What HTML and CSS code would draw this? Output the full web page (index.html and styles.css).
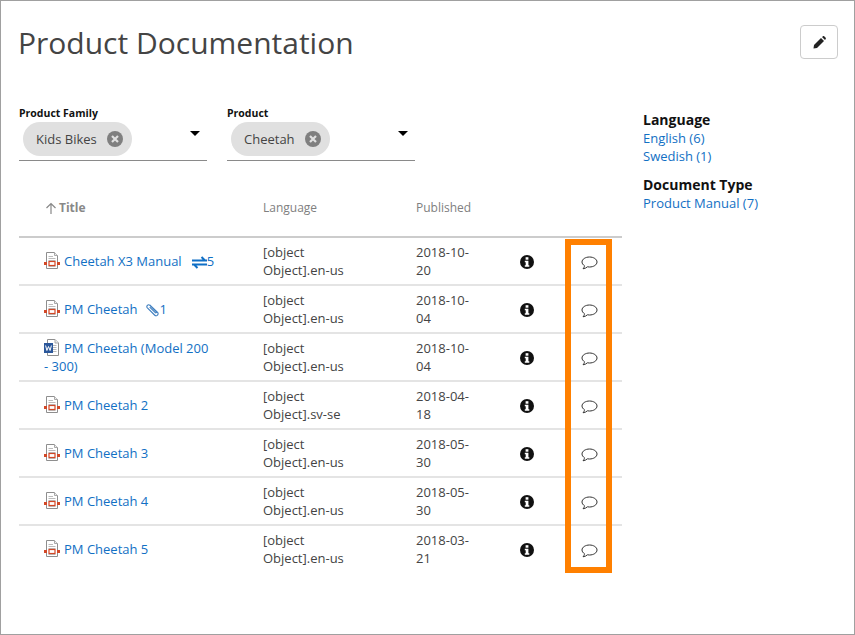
FILE: index.html
```html
<!DOCTYPE html>
<html lang="en">
<head>
<meta charset="utf-8">
<title>Product Documentation</title>
<link rel="stylesheet" href="styles.css">
</head>
<body>
<svg class="defs" width="0" height="0" aria-hidden="true">
  <defs>
    <symbol id="pdf" viewBox="0 0 16 17">
      <path d="M2.5.5H10.5L13.5 3.5V16.5H2.5Z" fill="#fff" stroke="#8e8e8e"/>
      <path d="M10.5.5V3.5H13.5" fill="#eee" stroke="#a8a8a8"/>
      <path d="M4.5 4.5H9M4.5 6.5H11.5M4.5 8.5H11.5M4.5 14.5H11.5" stroke="#bbb"/>
      <rect x="5" y="9.5" width="6" height="4" fill="#fff" stroke="#d24726" stroke-width="1.2"/>
      <rect x="0" y="10" width="3" height="3" fill="#d24726"/>
      <rect x="13" y="10" width="3" height="3" fill="#d24726"/>
    </symbol>
    <symbol id="word" viewBox="0 0 16 17">
      <path d="M3.5.5H11L14.5 4V16.5H3.5Z" fill="#fff" stroke="#8e8e8e"/>
      <path d="M11 .5V4H14.5" fill="#eee" stroke="#a8a8a8"/>
      <path d="M9 6.5H12.5M9 8.5H12.5M9 10.5H12.5M9 12.5H12.5" stroke="#bbb"/>
      <rect x="0" y="4" width="9" height="10" fill="#2b579a"/>
      <path d="M1.6 6.5L2.9 11.5L4.5 7.5L6.1 11.5L7.4 6.5" fill="none" stroke="#fff" stroke-width="1"/>
    </symbol>
    <symbol id="info" viewBox="0 0 14 14">
      <circle cx="7" cy="7" r="7" fill="#111"/>
      <rect x="5.6" y="2.2" width="2.8" height="2.5" fill="#fff"/>
      <path d="M4.8 5.7H8.4V10.2H9.3V11.8H4.8V10.2H5.7V7.3H4.8Z" fill="#fff"/>
    </symbol>
    <symbol id="bubble" viewBox="0 0 17 14">
      <path d="M8.5 1C4.4 1 1 3.2 1 6C1 7.5 2 8.8 3.5 9.7C3.4 10.7 3 11.8 2 12.8C3.9 12.6 5.4 11.8 6.4 10.8C7.1 10.9 7.8 11 8.5 11C12.6 11 16 8.8 16 6C16 3.2 12.6 1 8.5 1Z" fill="#fff" stroke="#333" stroke-width="1"/>
    </symbol>
  </defs>
</svg>
<div class="window">
  <main class="main">
    <h1 class="title">Product Documentation</h1>
    <div class="filters">
      <div class="filter">
        <label class="filter-label">Product Family</label>
        <div class="select">
          <span class="chip">Kids Bikes
            <svg class="chip-x" viewBox="0 0 16 16"><circle cx="8" cy="8" r="8" fill="#7f7f7f"/><path d="M5 5L11 11M11 5L5 11" stroke="#e0e0e0" stroke-width="2.2"/></svg>
          </span>
          <span class="caret"></span>
        </div>
      </div>
      <div class="filter">
        <label class="filter-label">Product</label>
        <div class="select">
          <span class="chip">Cheetah
            <svg class="chip-x" viewBox="0 0 16 16"><circle cx="8" cy="8" r="8" fill="#7f7f7f"/><path d="M5 5L11 11M11 5L5 11" stroke="#e0e0e0" stroke-width="2.2"/></svg>
          </span>
          <span class="caret"></span>
        </div>
      </div>
    </div>
    <div class="table-wrap">
      <table class="docs">
        <colgroup>
          <col class="c-title"><col class="c-lang"><col class="c-pub"><col class="c-info"><col class="c-comment">
        </colgroup>
        <thead>
          <tr>
            <th class="th-title"><svg class="sort" viewBox="0 0 12 12"><path d="M6 12V1.5M1.5 6L6 1.5L10.5 6" fill="none" stroke="#888" stroke-width="1.2"/></svg>Title</th>
            <th>Language</th>
            <th>Published</th>
            <th></th>
            <th></th>
          </tr>
        </thead>
        <tbody>
          <tr>
            <td class="td-title"><svg class="file"><use href="#pdf"/></svg><a href="#">Cheetah X3 Manual</a><svg class="tag-icon swap" viewBox="0 0 15 13"><path d="M0 4.5H12.5M9.5 1L13 4.5H15M15 8.5H2.5M5.5 12L2 8.5H0" fill="none" stroke="#0f6fc6" stroke-width="2"/></svg><a href="#">5</a></td>
            <td>[object Object].en-us</td><td>2018-10-20</td>
            <td class="td-icon"><svg class="info"><use href="#info"/></svg></td>
            <td class="td-icon"><svg class="bubble"><use href="#bubble"/></svg></td>
          </tr>
          <tr>
            <td class="td-title"><svg class="file"><use href="#pdf"/></svg><a href="#">PM Cheetah</a><svg class="tag-icon clip" viewBox="0 0 14 14"><path d="M4 1.5L12.5 9.5C13.6 10.8 12.8 12.2 12 12.8C11 13.5 10 13.2 9.2 12.4L1.5 4.8C.6 3.8 .8 2.8 1.5 2C2.3 1.2 3.3 1.1 4.2 2L11 8.8C11.6 9.5 10.8 10.4 10 9.8L4 3.8" fill="none" stroke="#3f7fc0" stroke-width="1.2"/></svg><a href="#">1</a></td>
            <td>[object Object].en-us</td><td>2018-10-04</td>
            <td class="td-icon"><svg class="info"><use href="#info"/></svg></td>
            <td class="td-icon"><svg class="bubble"><use href="#bubble"/></svg></td>
          </tr>
          <tr>
            <td class="td-title"><svg class="file"><use href="#word"/></svg><a href="#">PM Cheetah (Model 200 - 300)</a></td>
            <td>[object Object].en-us</td><td>2018-10-04</td>
            <td class="td-icon"><svg class="info"><use href="#info"/></svg></td>
            <td class="td-icon"><svg class="bubble"><use href="#bubble"/></svg></td>
          </tr>
          <tr>
            <td class="td-title"><svg class="file"><use href="#pdf"/></svg><a href="#">PM Cheetah 2</a></td>
            <td>[object Object].sv-se</td><td>2018-04-18</td>
            <td class="td-icon"><svg class="info"><use href="#info"/></svg></td>
            <td class="td-icon"><svg class="bubble"><use href="#bubble"/></svg></td>
          </tr>
          <tr>
            <td class="td-title"><svg class="file"><use href="#pdf"/></svg><a href="#">PM Cheetah 3</a></td>
            <td>[object Object].en-us</td><td>2018-05-30</td>
            <td class="td-icon"><svg class="info"><use href="#info"/></svg></td>
            <td class="td-icon"><svg class="bubble"><use href="#bubble"/></svg></td>
          </tr>
          <tr>
            <td class="td-title"><svg class="file"><use href="#pdf"/></svg><a href="#">PM Cheetah 4</a></td>
            <td>[object Object].en-us</td><td>2018-05-30</td>
            <td class="td-icon"><svg class="info"><use href="#info"/></svg></td>
            <td class="td-icon"><svg class="bubble"><use href="#bubble"/></svg></td>
          </tr>
          <tr>
            <td class="td-title"><svg class="file"><use href="#pdf"/></svg><a href="#">PM Cheetah 5</a></td>
            <td>[object Object].en-us</td><td>2018-03-21</td>
            <td class="td-icon"><svg class="info"><use href="#info"/></svg></td>
            <td class="td-icon"><svg class="bubble"><use href="#bubble"/></svg></td>
          </tr>
        </tbody>
      </table>
      <div class="highlight"></div>
    </div>
  </main>
  <aside class="side">
    <button class="edit" type="button" aria-label="Edit">
      <svg viewBox="0 0 13 13" width="13" height="13"><path d="M0.5 12.5L1 9L8 2L11 5L4 12Z" fill="#222"/><path d="M9 1L10 0.3C10.4 0 10.8 0 11.2 0.3L12.7 1.8C13 2.2 13 2.6 12.7 3L12 4Z" fill="#222"/></svg>
    </button>
    <h2 class="facet-title facet-first">Language</h2>
    <a class="facet" href="#">English (6)</a>
    <a class="facet" href="#">Swedish (1)</a>
    <h2 class="facet-title facet-next">Document Type</h2>
    <a class="facet" href="#">Product Manual (7)</a>
  </aside>
</div>
</body>
</html>
```

FILE: styles.css
```css
* { box-sizing: border-box; }
html, body { margin: 0; padding: 0; background: #fff; }
body { font-family: "Open Sans", "Liberation Sans", sans-serif; font-size: 13px; color: #444; }
.defs { position: absolute; }
a { color: #1270c4; text-decoration: none; }

.window {
  width: 855px;
  height: 635px;
  border: 1px solid #a0a0a0;
  display: flex;
  overflow: hidden;
}
.main { width: 621px; padding: 0 0 0 18px; flex: none; }
.title {
  margin: 0 0 0 -1px;
  padding-top: 21px;
  font-size: 30px;
  line-height: 42px;
  font-weight: 400;
  color: #444;
}

.filters { display: flex; gap: 20px; margin-top: 42px; }
.filter { width: 188px; }
.filter-label { display: block; font-size: 10.5px; line-height: 14px; font-weight: 700; color: #111; }
.select {
  height: 41px;
  border-bottom: 1px solid #8a8a8a;
  padding: 2px 0 0 4px;
  position: relative;
}
.chip {
  display: inline-flex;
  align-items: center;
  height: 34px;
  padding: 0 9px 0 13px;
  border-radius: 17px;
  background: #e0e0e0;
  color: #444;
  font-size: 13px;
  line-height: 32px;
}
.chip-x { width: 16px; height: 16px; margin-left: 10px; }
.caret {
  position: absolute;
  right: 7px;
  top: 11px;
  border-left: 5px solid transparent;
  border-right: 5px solid transparent;
  border-top: 5px solid #000;
}

.table-wrap { position: relative; }
.docs { border-collapse: collapse; table-layout: fixed; width: 603px; }
.c-title { width: 229px; }
.c-lang { width: 153px; }
.c-pub { width: 96px; }
.c-info { width: 60px; }
.c-comment { width: 65px; }
.docs th {
  height: 76px;
  padding: 18px 15px 0;
  text-align: left;
  font-size: 12px;
  font-weight: 400;
  color: #808080;
  border-bottom: 2px solid #ccc;
}
.docs th.th-title { padding-left: 25px; font-weight: 700; color: #888; }
.sort { width: 12px; height: 12px; vertical-align: -2px; margin: 0 2px 0 1px; }
.docs td {
  height: 48px;
  padding: 0 40px 0 15px;
  font-size: 13px;
  line-height: 18px;
  color: #444;
  border-bottom: 2px solid #e4e4e4;
  vertical-align: middle;
}
.docs td:nth-child(3) { padding-right: 25px; }
.docs tbody tr:last-child td { border-bottom-color: transparent; }
.docs td.td-title { padding: 0 33px 0 25px; }
.file { width: 16px; height: 17px; vertical-align: -3px; margin-right: 4px; }
.tag-icon { vertical-align: -3px; }
.swap { width: 15px; height: 13px; margin-left: 10px; vertical-align: -3px; }
.clip { width: 13px; height: 14px; margin-left: 9px; }
.docs td.td-icon { padding: 0 0 2px; text-align: center; }
.info { width: 14px; height: 14px; vertical-align: middle; }
.bubble { width: 17px; height: 14px; vertical-align: -5px; }

.highlight {
  position: absolute;
  left: 546px;
  top: 78px;
  width: 47px;
  height: 334px;
  border: 6px solid #ff8000;
  pointer-events: none;
}

.side { flex: 1; padding-left: 21px; position: relative; }
.edit {
  position: absolute;
  right: 16px;
  top: 24px;
  width: 38px;
  height: 34px;
  border: 1px solid #ccc;
  border-radius: 4px;
  background: #fff;
  padding: 1px 0 0;
  display: flex;
  align-items: center;
  justify-content: center;
}
.facet-title { margin: 0; font-size: 14px; line-height: 19px; font-weight: 700; color: #111; }
.facet-first { margin-top: 109px; }
.facet-next { margin-top: 10px; }
.facet { display: block; font-size: 13px; line-height: 18px; }
```
